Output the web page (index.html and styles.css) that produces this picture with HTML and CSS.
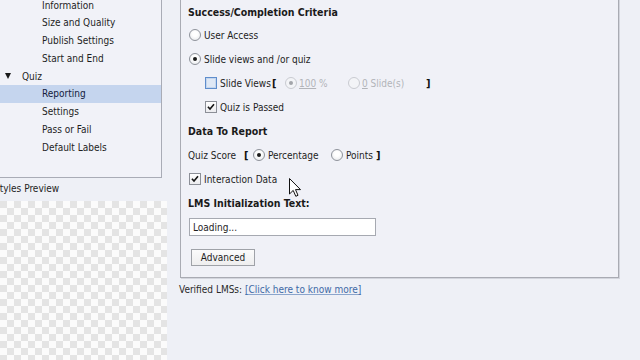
FILE: index.html
```html
<!DOCTYPE html>
<html>
<head>
<meta charset="utf-8">
<link rel="stylesheet" href="styles.css">
</head>
<body>
<div class="screen">
  <aside class="side">
    <div class="tree">
      <div class="node child">Information</div>
      <div class="node child">Size and Quality</div>
      <div class="node child">Publish Settings</div>
      <div class="node child">Start and End</div>
      <div class="node parent"><span class="tri"></span>Quiz</div>
      <div class="node child sel">Reporting</div>
      <div class="node child">Settings</div>
      <div class="node child">Pass or Fail</div>
      <div class="node child">Default Labels</div>
    </div>
    <div class="preview-label">Styles Preview</div>
    <div class="checker"></div>
  </aside>
  <main class="main">
    <section class="panel">
      <div class="row heading">Success/Completion Criteria</div>
      <div class="row"><span class="radio"></span><span>User Access</span></div>
      <div class="row"><span class="radio on"></span><span>Slide views and /or quiz</span></div>
      <div class="row indent">
        <span class="check hover"></span><span class="w-sv">Slide Views</span><span class="br w-br1">[</span>
        <span class="radio on dis"></span><span class="dis-text w-pct"><u>100</u> %</span>
        <span class="radio dis"></span><span class="dis-text w-sl"><u>0</u> Slide(s)</span><span class="br">]</span>
      </div>
      <div class="row indent"><span class="check on"><svg viewBox="0 0 12 12"><path d="M2.3 5.6 L4.8 8.4 L9.6 2.6"/></svg></span><span>Quiz is Passed</span></div>
      <div class="row heading">Data To Report</div>
      <div class="row">
        <span class="w-qs">Quiz Score</span><span class="br w-br2">[</span>
        <span class="radio on"></span><span class="w-per">Percentage</span>
        <span class="radio"></span><span class="w-pts">Points</span><span class="br">]</span>
      </div>
      <div class="row"><span class="check on first"><svg viewBox="0 0 12 12"><path d="M2.3 5.6 L4.8 8.4 L9.6 2.6"/></svg></span><span>Interaction Data</span></div>
      <div class="row heading">LMS Initialization Text:</div>
      <div class="input">Loading...</div>
      <div class="button">Advanced</div>
    </section>
    <div class="verified">Verified LMSs: <a class="link">[Click here to know more]</a></div>
  </main>
  <svg class="cursor" width="13" height="20" viewBox="0 0 13 20"><path d="M0.5 0.5 L0.5 16 L4.2 12.4 L6.8 18.3 L9 17.3 L6.5 11.6 L11.5 11.6 Z" fill="#fff" stroke="#111" stroke-width="1" stroke-linejoin="round"/></svg>
</div>
</body>
</html>
```

FILE: styles.css
```css
* { box-sizing: border-box; }
html, body { margin: 0; padding: 0; }
body {
  width: 640px;
  height: 360px;
  overflow: hidden;
  background: #eef0f6;
  font-family: "DejaVu Sans Condensed", "Liberation Sans", sans-serif;
  font-size: 10px;
  color: #1e1e1e;
}
.screen {
  position: relative;
  display: flex;
  width: 640px;
  height: 360px;
  overflow: hidden;
}
.side {
  width: 175px;
  margin-left: -7px;
  display: flex;
  flex-direction: column;
  flex: none;
}
.tree {
  margin-top: -10px;
  height: 188px;
  width: 169px;
  padding-top: 6.125px;
  background: #f1f2f8;
  border-right: 1px solid #a9acb6;
  border-bottom: 1px solid #a9acb6;
}
.node {
  height: 17.75px;
  display: flex;
  align-items: center;
  white-space: nowrap;
}
.child { padding-left: 49px; }
.parent { padding-left: 12px; }
.sel { background: #c5d5ee; color: #14203d; }
.tri {
  width: 0; height: 0;
  border-left: 3.5px solid transparent;
  border-right: 3.5px solid transparent;
  border-top: 6px solid #1a1a1a;
  margin-right: 11px;
}
.preview-label {
  margin-top: 5px;
  line-height: 12px;
  padding-left: 1px;
  white-space: nowrap;
}
.checker {
  margin-top: 6px;
  flex: 1;
  width: 174px;
  background: repeating-conic-gradient(#e4e4e4 0 25%, #fbfbfb 0 50%) 0 0 / 14px 14px;
}
.main {
  margin-left: 11px;
  display: flex;
  flex-direction: column;
  flex: none;
}
.panel {
  margin-top: -10px;
  margin-left: 1px;
  width: 439px;
  padding: 9px 0 11px 7px;
  background: #f0f1f7;
  border: 1px solid #a9abb3;
  box-shadow: 1px 1px 0 #d3d5dd;
  display: flex;
  flex-direction: column;
  align-items: flex-start;
}
.row {
  height: 24px;
  display: flex;
  align-items: center;
  white-space: nowrap;
}
.heading {
  font-weight: bold;
  font-size: 10.5px;
  color: #1a1a1a;
}
.panel > .heading:first-child { height: 23px; }
.radio {
  position: relative;
  width: 12px;
  height: 12px;
  margin-left: 1px;
  margin-right: 3px;
  border: 1px solid #8f939b;
  border-radius: 50%;
  background: radial-gradient(circle at 50% 40%, #ffffff 30%, #e2e4e8 100%);
  flex: none;
}
.radio.on::after {
  content: "";
  position: absolute;
  left: 3px; top: 3px;
  width: 4px; height: 4px;
  border-radius: 50%;
  background: #1c1c1c;
}
.radio.dis { border-color: #c9cbd1; background: #f3f4f7; margin-left: 0; margin-right: 2px; }
.radio.dis.on::after { background: #a3a5aa; }
.dis-text { color: #b2b4b9; }
.dis-text u { text-decoration-color: #b2b4b9; }
.indent { padding-left: 17px; }
.check {
  width: 12px;
  height: 12px;
  margin-right: 3px;
  border: 1px solid #8c8f97;
  background: linear-gradient(#ffffff, #ececef);
  flex: none;
  display: flex;
}
.check.first { margin-left: 1px; }
.check svg { width: 10px; height: 10px; }
.check path { fill: none; stroke: #161616; stroke-width: 1.9; }
.check.hover {
  border-color: #5f8dcc;
  background: #dfe8f5;
  box-shadow: inset 0 0 0 1px #c4d6ee;
}
.br { font-weight: bold; font-size: 11px; color: #111; }
.w-sv { width: 52px; }
.w-br1 { width: 13px; }
.w-pct { width: 49px; }
.w-sl { width: 64px; }
.w-qs { width: 56px; }
.w-br2 { width: 8px; }
.w-per { width: 62px; }
.w-pts { width: 30px; }
.input {
  margin-top: 3px;
  margin-left: 1px;
  width: 187px;
  height: 18px;
  padding-left: 3px;
  border: 1px solid #a6a9b1;
  background: #ffffff;
  display: flex;
  align-items: center;
}
.button {
  margin-top: 13px;
  margin-left: 3px;
  width: 64px;
  height: 17px;
  border: 1px solid #9fa2a8;
  background: linear-gradient(#fbfbfb, #eeeeef);
  display: flex;
  align-items: center;
  justify-content: center;
}
.verified {
  margin-top: 6px;
  line-height: 12px;
  white-space: nowrap;
  color: #2a2a2a;
}
.link {
  color: #3f6aa6;
  text-decoration: underline;
  text-decoration-color: #8ba5cc;
}
.cursor {
  position: absolute;
  left: 289px;
  top: 178px;
}
```
